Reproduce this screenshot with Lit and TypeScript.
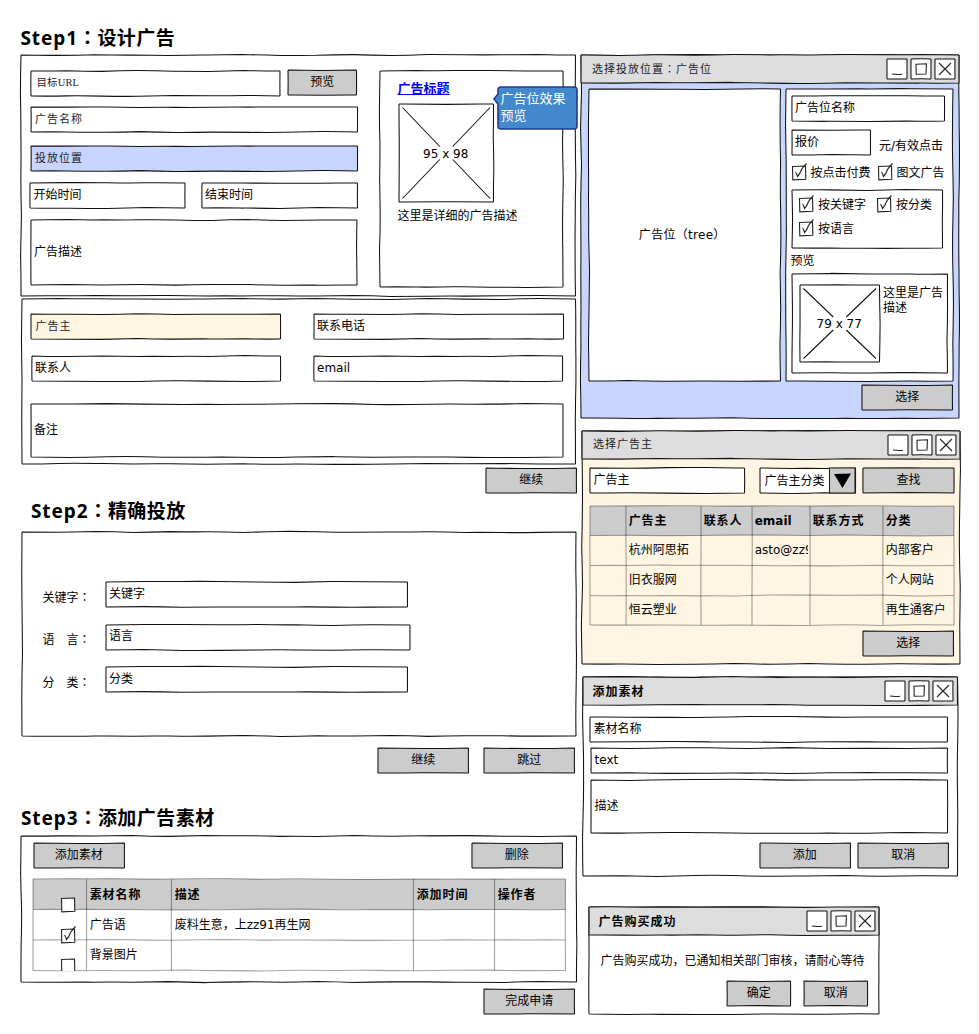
import { LitElement, html, svg, css, nothing, TemplateResult } from "lit";
import { customElement, property } from "lit/decorators.js";
import { styleMap } from "lit/directives/style-map.js";

type Pt = [number, number];

/** Small deterministic generator so that a given shape always wobbles alike. */
function rng(seed: number) {
  let s = (Math.floor(seed * 7919) % 233280) + 17;
  return () => {
    s = (s * 9301 + 49297) % 233280;
    return s / 233280 - 0.5;
  };
}

/** Hand-drawn line from a to b. */
function wobble(a: Pt, b: Pt, r: () => number, amp = 1.2): string {
  const dx = b[0] - a[0];
  const dy = b[1] - a[1];
  const len = Math.hypot(dx, dy);
  const n = Math.max(1, Math.round(len / 38));
  const nx = -dy / len;
  const ny = dx / len;
  let d = `M${a[0]} ${a[1]}`;
  let px = a[0];
  let py = a[1];
  for (let i = 1; i <= n; i++) {
    const o = i === n ? 0 : r() * amp;
    const x = a[0] + (dx * i) / n + nx * o;
    const y = a[1] + (dy * i) / n + ny * o;
    const c = r() * amp * 0.6;
    d += `Q${((px + x) / 2 + nx * c).toFixed(2)} ${((py + y) / 2 + ny * c).toFixed(2)} ${x.toFixed(2)} ${y.toFixed(2)}`;
    px = x;
    py = y;
  }
  return d;
}

function rectPath(w: number, h: number, seed: number): string {
  const r = rng(seed);
  return [
    wobble([0, 0], [w, 0], r),
    wobble([w, 0], [w, h], r),
    wobble([w, h], [0, h], r),
    wobble([0, h], [0, 0], r),
  ].join("");
}

/** Full-width colons are set from the TC face, which centres them in their cell. */
const colons = (text: string) =>
  text.split(/(：)/).map((p) => (p === "：" ? html`<span class="colon">：</span>` : p));

const colonStyle = css`
  .colon { font-family: "Noto Sans CJK TC", sans-serif; }
`;

@customElement("sk-box")
class SkBox extends LitElement {
  @property({ type: Number }) w = 10;
  @property({ type: Number }) h = 10;
  @property() fill = "#fff";
  @property({ type: Boolean }) cross = false;

  static styles = css`
    :host { display: block; flex: none; }
    .box { position: relative; }
    svg { position: absolute; inset: 0; overflow: visible; }
    .content { position: relative; width: 100%; height: 100%; }
  `;

  render() {
    const { w, h } = this;
    return html`<div class="box" style=${styleMap({ width: `${w}px`, height: `${h}px` })}>
      <svg width=${w} height=${h} fill="none" stroke="#111" stroke-width="1.05">
        <rect width=${w} height=${h} fill=${this.fill} stroke="none" />
        <path d=${rectPath(w, h, w * 3.1 + h * 1.7)} />
        ${this.cross
          ? svg`<path d="M3.5 3.5L${w / 2 - 6.5} ${h / 2 - 6.5}M${w / 2 + 6.5} ${h / 2 + 6.5}L${w - 3.5} ${h - 3.5}M${w - 3.5} 3.5L${w / 2 + 6.5} ${h / 2 - 6.5}M${w / 2 - 6.5} ${h / 2 + 6.5}L3.5 ${h - 3.5}" />`
          : nothing}
      </svg>
      <div class="content"><slot></slot></div>
    </div>`;
  }
}

@customElement("sk-check")
class SkCheck extends LitElement {
  @property({ type: Boolean }) checked = false;

  static styles = css`
    :host { display: block; flex: none; width: 14px; height: 14px; }
    svg { display: block; overflow: visible; }
  `;

  render() {
    return html`<svg width="14" height="14" fill="none" stroke="#222" stroke-width="1.1">
      <path d="M.5 .5L13.5 0L13.8 13.2L.8 13.8Z" fill="#fff" />
      ${this.checked ? svg`<path d="M3.5 6Q5 8 5.5 10.5Q8 8 9.5 3.5Q11.5 .5 14.5 -2.5" />` : nothing}
    </svg>`;
  }
}

type Cell = string | TemplateResult;

@customElement("sk-table")
class SkTable extends LitElement {
  @property({ attribute: false }) cols: number[] = [];
  @property({ attribute: false }) rows: number[] = [];
  @property({ attribute: false }) data: Cell[][] = [];

  static styles = css`
    :host { display: block; flex: none; }
    .table { position: relative; }
    svg { position: absolute; inset: 0; overflow: visible; }
    .grid { position: relative; display: grid; height: 100%; overflow: hidden; }
    .cell { box-sizing: border-box; padding: 0 1.5px 0 3.2px; min-width: 0; min-height: 0; display: flex; align-items: center; white-space: nowrap; }
    .text { overflow: hidden; line-height: 18px; }
    .head { font-weight: bold; letter-spacing: 0.9px; padding-top: 2px; }
    .latin { letter-spacing: 0; }
    .tick { padding: 19px 0 0 28px; align-items: flex-start; }
  `;

  render() {
    const sum = (a: number[]) => a.reduce((x, y) => x + y, 0);
    const w = sum(this.cols);
    const h = sum(this.rows);
    const r = rng(w + h);
    const xs = this.cols.map((_, i) => sum(this.cols.slice(0, i))).concat(w);
    const ys = this.rows.map((_, i) => sum(this.rows.slice(0, i))).concat(h);
    const px = (a: number[]) => a.map((v) => `${v}px`).join(" ");
    return html`<div class="table" style=${styleMap({ width: `${w}px`, height: `${h}px` })}>
      <svg width=${w} height=${h} fill="none" stroke="#000" stroke-opacity=".36" stroke-width="1.1">
        <rect width=${w} height=${this.rows[0]} fill="#ccc" stroke="none" />
        ${xs.map((x) => svg`<path d=${wobble([x, 0], [x, h], r, 0.5)} />`)}
        ${ys.map((y) => svg`<path d=${wobble([0, y], [w, y], r, 1)} />`)}
      </svg>
      <div class="grid" style=${styleMap({ gridTemplateColumns: px(this.cols), gridTemplateRows: px(this.rows) })}>
        ${this.data.map((row, i) =>
          row.map((c) =>
            typeof c === "string"
              ? html`<div class="cell ${i === 0 ? "head" : ""} ${/^[a-z]/.test(c) ? "latin" : ""}"><span class="text">${c}</span></div>`
              : html`<div class="cell tick">${c}</div>`
          )
        )}
      </div>
    </div>`;
  }
}

@customElement("sk-window")
class SkWindow extends LitElement {
  @property({ type: Number }) w = 100;
  @property({ type: Number }) h = 100;
  @property() fill = "#fff";
  @property() heading = "";
  @property({ type: Boolean }) kai = false;

  static styles = [
    colonStyle,
    css`
      :host { display: block; flex: none; }
      .bar { display: flex; align-items: center; height: 28px; box-sizing: border-box; padding: 0 4px 0 10px; gap: 4px; }
      .title { flex: 1; font-weight: bold; font-size: 12px; letter-spacing: 1px; line-height: 18px; padding-top: 2px; }
      .kai { font-weight: 400; font-size: 11px; letter-spacing: 1px; color: #1c1c28; padding: 0 0 0 1px; }
      .glyph { display: block; }
    `,
  ];

  render() {
    const icons = [
      svg`<path d="M5 15Q10 15.8 15 15.2" />`,
      svg`<path d="M5 5.2L15.4 4.8L15 15L5.2 15.2Z" />`,
      svg`<path d="M4 4L16 16M16 4L4 16" />`,
    ];
    return html`<sk-box .w=${this.w} .h=${this.h} .fill=${this.fill}>
      <sk-box .w=${this.w} .h=${28} .fill=${"#ddd"}>
        <div class="bar">
          <span class="title ${this.kai ? "kai" : ""}">${colons(this.heading)}</span>
          ${icons.map(
            (g, i) => html`<sk-box .w=${20} .h=${20 - i * 0.01}>
              <svg class="glyph" width="20" height="20" fill="none" stroke="#222" stroke-width="1.1">${g}</svg>
            </sk-box>`
          )}
        </div>
      </sk-box>
      <slot></slot>
    </sk-box>`;
  }
}

const field = (w: number, text: string, cls = "", h = 25, fill = "#fff") =>
  html`<sk-box class=${cls} .w=${w} .h=${h} .fill=${fill}><div class="label">${text}</div></sk-box>`;

const button = (text: string, cls = "", w = 90.5) =>
  html`<sk-box class=${cls} .w=${w} .h=${25} .fill=${"#ccc"}><div class="btn">${text}</div></sk-box>`;

const image = (w: number, h: number, text: string, cls = "") =>
  html`<sk-box class=${cls} .w=${w} .h=${h} cross><div class="btn size">${text}</div></sk-box>`;

const check = (text: string, cls = "") =>
  html`<div class="check ${cls}"><sk-check checked></sk-check><span>${text}</span></div>`;

@customElement("app-root")
class AppRoot extends LitElement {
  static styles = [
    colonStyle,
    css`
    :host {
      display: block;
      width: 979px;
      height: 1034px;
      overflow: hidden;
      background: #fff;
      color: #000;
      font: 12px/18px "DejaVu Sans", "Noto Sans CJK SC", sans-serif;
    }
    .page { display: flex; align-items: flex-start; padding-left: 21px; }
    .left { width: 560px; flex: none; display: flex; flex-direction: column; }
    .right { display: flex; flex-direction: column; padding-top: 55px; }
    .row { display: flex; align-items: flex-start; }
    .col { display: flex; flex-direction: column; align-items: flex-start; }

    .label { height: 100%; box-sizing: border-box; padding: 0 0 1.5px 3.5px; display: flex; align-items: center; white-space: nowrap; }
    .kai .label { font: 400 11px/18px "Liberation Serif", "Noto Sans CJK SC", serif; letter-spacing: 1px; color: #1c1c28; padding-left: 4.5px; }
    .url .label { font-size: 10.5px; letter-spacing: 0.1px; padding-left: 6px; }
    .btn { height: 100%; box-sizing: border-box; padding-bottom: 1px; display: flex; align-items: center; justify-content: center; white-space: nowrap; }
    .tree { padding-right: 5px; letter-spacing: 0.3px; }
    .size { padding: 1px 0 0; }
    h1 { margin: 0; font: bold 19px/28px "Noto Sans", "Noto Sans CJK SC", sans-serif; letter-spacing: 0.45px; white-space: nowrap; }
    .latin { letter-spacing: 0.9px; }
    .t1 { height: 32px; padding-top: 23px; margin-left: -0.5px; }
    .t2 { height: 36px; padding: 3px 0 0 10px; }
    .t3 { height: 33px; padding-top: 30px; }

    .design { padding: 15px 0 0 9.5px; gap: 22.5px; }
    .design-top { gap: 8.5px; }
    .dates { gap: 16.5px; margin-left: -0.5px; }
    .mt1 { margin-top: 1px; }
    .mt11 { margin-top: 11px; }
    .mt12 { margin-top: 12px; }
    .mt14 { margin-top: 14px; }
    .ad { position: relative; padding: 9px 0 0 18px; }
    .link { color: #00f; font-weight: bold; font-size: 13px; text-decoration: underline; }
    .ad-image { margin: 6px 0 5px 1px; }
    .callout { position: absolute; left: 113px; top: 15px; width: 85px; height: 45px; }
    .callout-shape { display: block; position: absolute; inset: 0; overflow: visible; }
    .callout-text { position: relative; color: #fff; font-size: 13px; line-height: 17px; padding: 4px 0 0 8px; white-space: nowrap; }

    .p2 { margin: 3px 0 0 1px; }
    .contact { padding: 15px 0 0 9px; }
    .pair { gap: 33px; height: 42px; }
    .pair-low { gap: 33.5px; margin-left: 0.5px; }
    .note { margin: 6px 0 0 -0.5px; }
    .next { margin: 4px 0 0 465px; }

    .p3 { margin-left: 1px; }
    .targets { padding: 50px 0 0 20.5px; }
    .target { height: 42.5px; }
    .name { width: 63px; padding-top: 5.5px; white-space: pre; }
    .step-actions { margin: 12px 0 0 357px; gap: 15.5px; }

    .materials { padding: 7px 0 0 12.5px; }
    .material-actions { gap: 347.5px; }
    .material-table { margin: 11px 0 0 -0.5px; }
    .finish { margin: 7px 0 0 463px; }

    .w1body { padding: 6px 0 0 8px; gap: 5px; }
    .slot { padding: 7px 0 0 6px; }
    .price { height: 34px; margin-top: 9px; gap: 9px; }
    .unit { padding-top: 7px; white-space: nowrap; }
    .check { display: flex; align-items: center; gap: 5px; white-space: nowrap; height: 18px; }
    .checks { margin-top: 0; }
    .c1 { width: 86px; }
    .group { margin-top: 7.5px; }
    .group-in { padding: 6px 0 0 7.5px; gap: 6px; }
    .c2 { width: 78px; }
    .preview-label { margin: 4px 0 4px -1px; }
    .preview { padding: 11px 0 0 8px; gap: 4px; }
    .preview-text { line-height: 15px; white-space: nowrap; padding-top: 1px; }
    .w1select { margin: 4px 0 0 281px; }

    .w2 { margin: 13px 0 0 1px; }
    .search { padding: 9px 0 0 8px; }
    .combo { margin: 0 8px 0 15px; }
    .combo-in { display: flex; height: 100%; align-items: center; padding-left: 5px; gap: 4px; white-space: nowrap; }
    .drop { display: block; overflow: visible; }
    .advertisers { margin: 12.5px 0 0 7.5px; }
    .w2select { margin: 6.5px 0 0 281px; }

    .w3 { margin: 13px 0 0 1.5px; }
    .material-form { padding: 12px 0 0 7.5px; }
    .f2 { margin: 6px 0 7px 1px; }
    .w3actions { margin: 10px 0 0 169.5px; gap: 8px; }
    .f3 { margin-left: 1px; }

    .w4 { margin: 31px 0 0 7.5px; }
    .done { padding: 17px 0 0 12px; white-space: nowrap; }
    .w4actions { margin: 11px 0 0 138.5px; gap: 13.5px; }
  `,
  ];

  render() {
    const blue = "#c8d5ff";
    const cream = "#fff5e3";
    const step = (n: number, text: string) =>
      html`<h1 class="t${n}"><span class="latin">Step${n}</span>${colons("：")}${text}</h1>`;
    const target = (name: string, w: number, value: string) =>
      html`<div class="row target"><span class="name">${colons(name)}</span>${field(w, value)}</div>`;
    return html`<main class="page">
      <section class="left">
        ${step(1, "设计广告")}
        <sk-box .w=${554.5} .h=${241}>
          <div class="row design">
            <div class="col">
              <div class="row design-top">
                ${field(249, "目标URL", "kai url mt1")} ${button("预览", "", 68.5)}
              </div>
              ${field(326.5, "广告名称", "kai mt11")}
              ${field(326.5, "投放位置", "kai mt14", 25, blue)}
              <div class="row dates mt12">${field(155, "开始时间")} ${field(155.5, "结束时间")}</div>
              ${field(326, "广告描述", "mt12", 65)}
            </div>
            <sk-box class="mt1" .w=${183} .h=${216}>
              <div class="ad">
                <span class="link">广告标题</span>
                ${image(94.5, 98, "95 x 98", "ad-image")}
                <span>这里是详细的广告描述</span>
                <div class="callout">
                  <svg class="callout-shape" width="85" height="45">
                    <path d="M8 1H81Q84 1 84 4V40Q84 43 81 43H8Q5 43 5 40V18L1 13L5 8V4Q5 1 8 1Z" fill="#4387cc" stroke="#1f3d8c" stroke-width="1.6" />
                  </svg>
                  <div class="callout-text">广告位效果<br />预览</div>
                </div>
              </div>
            </sk-box>
          </div>
        </sk-box>
        <sk-box class="p2" .w=${553.5} .h=${165}>
          <div class="col contact">
            <div class="row pair">
              ${field(249.5, "广告主", "kai", 25, cream)} ${field(249.5, "联系电话")}
            </div>
            <div class="row pair pair-low">${field(248.5, "联系人")} ${field(248.5, "email")}</div>
            ${field(532, "备注", "note", 53)}
          </div>
        </sk-box>
        ${button("继续", "next")}
        ${step(2, "精确投放")}
        <sk-box class="p3" .w=${554} .h=${204}>
          <div class="col targets">
            ${target("关键字：", 301.5, "关键字")}
            ${target("语　言：", 304, "语言")}
            ${target("分　类：", 301.5, "分类")}
          </div>
        </sk-box>
        <div class="row step-actions">${button("继续")} ${button("跳过")}</div>
        ${step(3, "添加广告素材")}
        <sk-box .w=${555.5} .h=${146}>
          <div class="col materials">
            <div class="row material-actions">${button("添加素材")} ${button("删除")}</div>
            <sk-table
              class="material-table"
              .cols=${[53.5, 85, 242, 81, 71]}
              .rows=${[30.5, 30.5, 30.5]}
              .data=${[
                [html`<sk-check></sk-check>`, "素材名称", "描述", "添加时间", "操作者"],
                [html`<sk-check checked></sk-check>`, "广告语", "废料生意，上zz91再生网", "", ""],
                [html`<sk-check></sk-check>`, "背景图片", "", "", ""],
              ]}
            ></sk-table>
          </div>
        </sk-box>
        ${button("完成申请", "finish")}
      </section>

      <section class="right">
        <sk-window .w=${378} .h=${363} .fill=${blue} heading="选择投放位置：广告位" kai>
          <div class="row w1body">
            <sk-box .w=${191.5} .h=${292}><div class="btn tree">广告位（tree）</div></sk-box>
            <sk-box .w=${167} .h=${292}>
              <div class="col slot">
                ${field(152.5, "广告位名称")}
                <div class="row price">${field(78.5, "报价")}<span class="unit">元/有效点击</span></div>
                <div class="row checks">${check("按点击付费", "c1")} ${check("图文广告")}</div>
                <sk-box class="group" .w=${150.5} .h=${58}>
                  <div class="col group-in">
                    <div class="row">${check("按关键字", "c2")} ${check("按分类")}</div>
                    ${check("按语言")}
                  </div>
                </sk-box>
                <span class="preview-label">预览</span>
                <sk-box .w=${155.5} .h=${99}>
                  <div class="row preview">
                    ${image(79.5, 77, "79 x 77")}
                    <div class="preview-text">这里是广告<br />描述</div>
                  </div>
                </sk-box>
              </div>
            </sk-box>
          </div>
          ${button("选择", "w1select")}
        </sk-window>

        <sk-window class="w2" .w=${378} .h=${233} .fill=${cream} heading="选择广告主" kai>
          <div class="row search">
            ${field(154.5, "广告主")}
            <sk-box class="combo" .w=${95.5} .h=${25}>
              <div class="combo-in">
                <span>广告主分类</span>
                <svg class="drop" width="26.5" height="25">
                  <path d="M.5 0H26V25H.5Z" fill="#ccc" stroke="#222" stroke-width="1.1" />
                  <path d="M5 6L22 5.5L13.5 20Z" fill="#000" />
                </svg>
              </div>
            </sk-box>
            ${button("查找", "", 91)}
          </div>
          <sk-table
            class="advertisers"
            .cols=${[36, 75, 51, 58, 73, 71]}
            .rows=${[29.5, 30, 30, 29.5]}
            .data=${[
              ["", "广告主", "联系人", "email", "联系方式", "分类"],
              ["", "杭州阿思拓", "", "asto@zz9", "", "内部客户"],
              ["", "旧衣服网", "", "", "", "个人网站"],
              ["", "恒云塑业", "", "", "", "再生通客户"],
            ]}
          ></sk-table>
          ${button("选择", "w2select")}
        </sk-window>

        <sk-window class="w3" .w=${374.5} .h=${199} heading="添加素材">
          <div class="col material-form">
            ${field(357.5, "素材名称")} ${field(356.5, "text", "f2")} ${field(356.5, "描述", "f3", 53)}
            <div class="row w3actions">${button("添加")} ${button("取消")}</div>
          </div>
        </sk-window>

        <sk-window class="w4" .w=${290} .h=${107} heading="广告购买成功">
          <div class="done">广告购买成功，已通知相关部门审核，请耐心等待</div>
          <div class="row w4actions">${button("确定", "", 63.5)} ${button("取消", "", 63.5)}</div>
        </sk-window>
      </section>
    </main>`;
  }
}
